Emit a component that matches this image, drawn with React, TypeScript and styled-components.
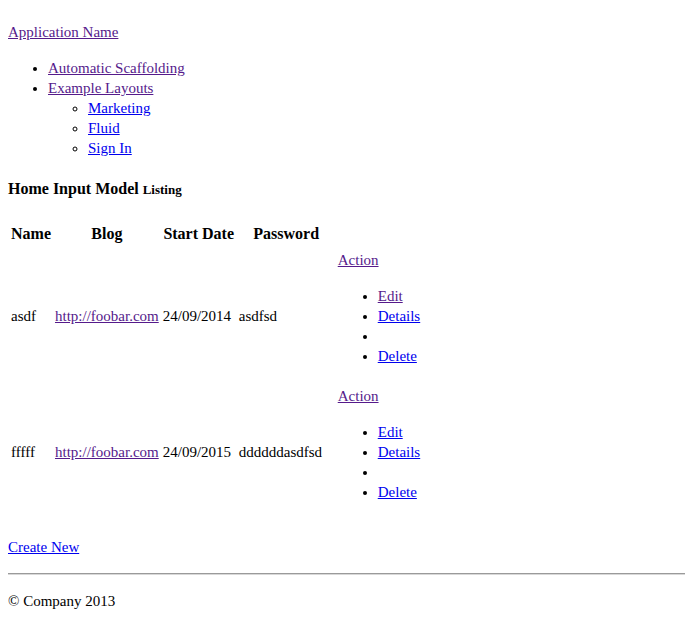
import React from 'react';
import styled, { createGlobalStyle } from 'styled-components';

const GlobalStyle = createGlobalStyle`
  html, body {
    margin: 0;
    padding: 0;
    background: #fff;
  }
  body {
    font-family: "Liberation Serif", "Times New Roman", serif;
    font-size: 15px;
    line-height: 20px;
    color: #000;
  }
`

const Page = styled.div`
  padding: 22px 0 0 8px;
`

const Link = styled.a<{ $visited?: boolean }>`
  color: ${p => (p.$visited ? '#551a8b' : '#0000ee')};
  text-decoration: underline;
`

const Brand = styled.div`
  margin: 0;
`

const NavList = styled.ul<{ $nested?: boolean }>`
  margin: ${p => (p.$nested ? '0' : '16px 0')};
  padding-left: 40px;
  list-style-type: ${p => (p.$nested ? 'circle' : 'disc')};
`

const Heading = styled.h2`
  margin: 21px 0 21px;
  font-size: 16px;
  font-weight: bold;
  line-height: 20px;
`

const Small = styled.small`
  font-size: 13px;
`

const Table = styled.table`
  border-collapse: separate;
  border-spacing: 2px;
  font-size: 15px;
`

const Th = styled.th<{ $w?: number }>`
  padding: 1px 1px 3px;
  font-size: 16px;
  font-weight: bold;
  text-align: center;
  ${p => (p.$w ? `width: ${p.$w}px;` : '')}
`

const Td = styled.td`
  padding: 1px;
  vertical-align: middle;
  white-space: nowrap;
`

const ActionList = styled.ul`
  margin: 16px 0;
  padding-left: 40px;
  list-style-type: disc;
`

const Para = styled.p`
  margin: 16px 0;
`

const Rule = styled.hr`
  margin: 16px 0;
  border: 0;
  border-top: 1px solid #9a9a9a;
  border-bottom: 1px solid #d8d8d8;
  height: 0;
`

const Footer = styled.p`
  margin: 16px 0 0;
`

type Row = {
  name: string;
  blog: string;
  start: string;
  password: string;
  editVisited: boolean;
};

const rows: Row[] = [
  { name: 'asdf', blog: 'http://foobar.com', start: '24/09/2014', password: 'asdfsd', editVisited: true },
  { name: 'fffff', blog: 'http://foobar.com', start: '24/09/2015', password: 'ddddddasdfsd', editVisited: false },
];

const App: React.FC = () => {
  return (
    <Page>
      <GlobalStyle />
      <Brand>
        <Link href="#" $visited>Application Name</Link>
      </Brand>
      <NavList>
        <li><Link href="#" $visited>Automatic Scaffolding</Link></li>
        <li>
          <Link href="#" $visited>Example Layouts</Link>
          <NavList $nested>
            <li><Link href="#">Marketing</Link></li>
            <li><Link href="#">Fluid</Link></li>
            <li><Link href="#">Sign In</Link></li>
          </NavList>
        </li>
      </NavList>

      <Heading>Home Input Model <Small>Listing</Small></Heading>

      <Table>
        <thead>
          <tr>
            <Th>Name</Th>
            <Th>Blog</Th>
            <Th $w={72}>Start Date</Th>
            <Th $w={95}>Password</Th>
            <Th></Th>
          </tr>
        </thead>
        <tbody>
          {rows.map((r, i) => (
            <tr key={i}>
              <Td>{r.name}</Td>
              <Td><Link href="#" $visited>{r.blog}</Link></Td>
              <Td>{r.start}</Td>
              <Td>{r.password}</Td>
              <Td>
                <div><Link href="#" $visited>Action</Link></div>
                <ActionList>
                  <li><Link href="#" $visited={r.editVisited}>Edit</Link></li>
                  <li><Link href="#">Details</Link></li>
                  <li></li>
                  <li><Link href="#">Delete</Link></li>
                </ActionList>
              </Td>
            </tr>
          ))}
        </tbody>
      </Table>

      <Para>
        <Link href="#">Create New</Link>
      </Para>
      <Rule />
      <Footer>© Company 2013</Footer>
    </Page>
  );
};

export default App;
